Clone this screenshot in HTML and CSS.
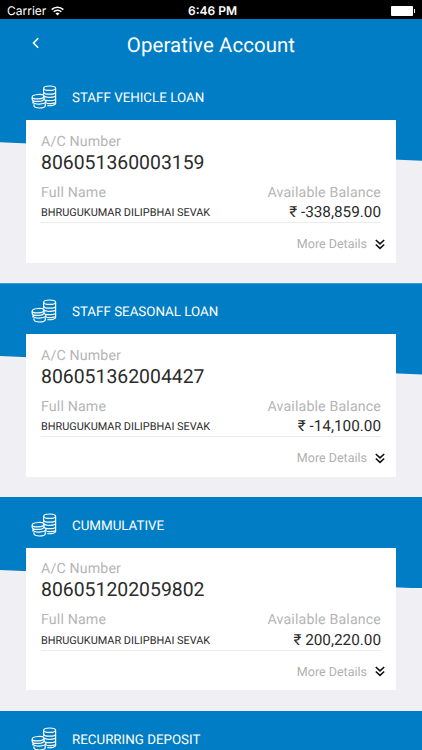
FILE: index.html
```html
<!DOCTYPE html>
<html lang="en">
<head>
  <meta charset="UTF-8">
  <title>Operative Account</title>
  <link rel="stylesheet" href="styles.css">
</head>
<body>
  <!-- shared icons -->
  <svg class="sprite" width="0" height="0">
    <symbol id="coins" viewBox="0 0 26 24">
      <g fill="none" stroke="#fff" stroke-width="1.2">
        <ellipse cx="18.6" cy="3.2" rx="6" ry="2.2"/>
        <path d="M12.6 3.2v6M24.6 3.2v15.3c0 1.4-3.4 2.5-8.2 2.2"/>
        <path d="M12.6 6.9c0 3 12 3 12 0M12.6 10.6c1.6 2.3 12 2.3 12 0M14.8 15.4c4.8.8 9.8-.1 9.8-1.5M15.6 18.5c4.5.4 9-.3 9-1.6"/>
        <ellipse cx="7.1" cy="11.7" rx="5.9" ry="2.2" transform="rotate(-5 7.1 11.7)"/>
        <path d="M1.2 12.2v2.4c.7 2.8 11.2 2.3 11.9-.8v-2.5M2.2 16.1c-.5.7-.4 1.7 0 2.3M13.1 14.2l1.8 1.5v2.7"/>
        <path d="M2.2 17.3c1.5 2.6 11.2 2.3 12.7-.5M3 19.3v1.8c1.3 2.6 10.1 2.5 11.3-.2v-2.3"/>
      </g>
    </symbol>
    <symbol id="chevrons" viewBox="0 0 10 11">
      <path d="M.8 1L5 4.8 9.2 1M.8 5.5L5 9.3l4.2-3.8" fill="none" stroke="#111" stroke-width="1.6"/>
    </symbol>
  </svg>

  <div class="status-bar">
    <div class="carrier">
      <span>Carrier</span>
      <svg width="13" height="10" viewBox="0 0 13 10">
        <path d="M.7 3.6a8.2 8.2 0 0 1 11.6 0M2.7 5.8a5.4 5.4 0 0 1 7.6 0" fill="none" stroke="#fff" stroke-width="1.6"/>
        <path d="M6.5 9.5L4.5 7.4a2.9 2.9 0 0 1 4 0z" fill="#fff"/>
      </svg>
    </div>
    <div class="time">6:46 PM</div>
    <div class="battery"><span class="cell"></span><span class="tip"></span></div>
  </div>

  <header class="nav">
    <svg class="back" width="8" height="12" viewBox="0 0 8 12">
      <path d="M6.2 1.2L1.5 6l4.7 4.8" fill="none" stroke="#fff" stroke-width="1.6"/>
    </svg>
    <h1>Operative Account</h1>
  </header>

  <main>
    <section class="account">
      <div class="account-head"><svg class="coins"><use href="#coins"/></svg><h2>STAFF VEHICLE LOAN</h2></div>
      <div class="card">
        <div class="label">A/C Number</div>
        <div class="number">806051360003159</div>
        <div class="row labels"><span class="label">Full Name</span><span class="label">Available Balance</span></div>
        <div class="row values"><span class="name">BHRUGUKUMAR DILIPBHAI SEVAK</span><span class="balance">₹ -338,859.00</span></div>
        <div class="more"><span>More Details</span><svg width="10" height="11"><use href="#chevrons"/></svg></div>
      </div>
    </section>

    <section class="account">
      <div class="account-head"><svg class="coins"><use href="#coins"/></svg><h2>STAFF SEASONAL LOAN</h2></div>
      <div class="card">
        <div class="label">A/C Number</div>
        <div class="number">806051362004427</div>
        <div class="row labels"><span class="label">Full Name</span><span class="label">Available Balance</span></div>
        <div class="row values"><span class="name">BHRUGUKUMAR DILIPBHAI SEVAK</span><span class="balance">₹ -14,100.00</span></div>
        <div class="more"><span>More Details</span><svg width="10" height="11"><use href="#chevrons"/></svg></div>
      </div>
    </section>

    <section class="account">
      <div class="account-head"><svg class="coins"><use href="#coins"/></svg><h2>CUMMULATIVE</h2></div>
      <div class="card">
        <div class="label">A/C Number</div>
        <div class="number">806051202059802</div>
        <div class="row labels"><span class="label">Full Name</span><span class="label">Available Balance</span></div>
        <div class="row values"><span class="name">BHRUGUKUMAR DILIPBHAI SEVAK</span><span class="balance">₹ 200,220.00</span></div>
        <div class="more"><span>More Details</span><svg width="10" height="11"><use href="#chevrons"/></svg></div>
      </div>
    </section>

    <section class="account">
      <div class="account-head"><svg class="coins"><use href="#coins"/></svg><h2>RECURRING DEPOSIT</h2></div>
    </section>
  </main>
</body>
</html>
```

FILE: styles.css
```css
* {
  box-sizing: border-box;
}

body {
  margin: 0;
  height: 750px;
  overflow: hidden;
  display: flex;
  flex-direction: column;
  background: #efeff4;
  color: #2b2b2b;
  font-family: Roboto, sans-serif;
  text-rendering: geometricPrecision;
}

h1, h2 {
  margin: 0;
  font-weight: 400;
}

main {
  flex: 1;
  min-height: 0;
  overflow: hidden;
}

.sprite {
  position: absolute;
}

/* status bar */
.status-bar {
  flex: none;
  height: 19px;
  padding: 3px 7px 0;
  display: grid;
  grid-template-columns: 1fr auto 1fr;
  align-items: center;
  background: #000;
  color: #fff;
  font-family: Inter, sans-serif;
  font-size: 12px;
  line-height: 16px;
}

.carrier {
  display: flex;
  align-items: center;
  gap: 5px;
}

.time {
  padding-left: 3px;
  font-weight: 600;
}

.battery {
  display: flex;
  align-items: center;
  justify-content: flex-end;
  gap: 1px;
}

.cell {
  width: 22px;
  height: 10px;
  border-radius: 1px;
  background: #fff;
}

.tip {
  width: 1px;
  height: 4px;
  background: #fff;
}

/* title */
.nav {
  flex: none;
  height: 50.5px;
  padding: 0 32px;
  display: grid;
  grid-template-columns: 8px 1fr 8px;
  background: #007dc4;
  color: #fff;
}

.back {
  margin-top: 18px;
}

.nav h1 {
  text-align: center;
  font-size: 20.4px;
  line-height: 52px;
  letter-spacing: 0.1px;
}

/* accounts */
.account {
  position: relative;
  height: 213.8px;
  padding: 0 26px;
}

/* slanted blue band behind the top of the card */
.account::before {
  content: "";
  position: absolute;
  z-index: -1;
  top: 0;
  left: 0;
  right: 0;
  height: 91.3px;
  background: #007dc4;
  clip-path: polygon(0 0, 100% 0, 100% 100%, 0 72.8px);
}

.account-head {
  height: 50.8px;
  padding: 5px 0 0 5px;
  display: flex;
  align-items: center;
  gap: 15px;
  color: #fff;
}

.coins {
  width: 26px;
  height: 24px;
}

.account-head h2 {
  padding-top: 3px;
  font-size: 13.35px;
}

.card {
  height: 142.5px;
  padding: 12.5px 15px 0;
  background: #fff;
}

.label {
  color: #b5b5b5;
  font-size: 14.2px;
  line-height: 18px;
  letter-spacing: 0.15px;
}

.number {
  font-size: 19.4px;
  line-height: 24px;
}

.row {
  display: flex;
  justify-content: space-between;
  align-items: center;
}

.labels {
  margin-top: 9px;
}

.values {
  height: 21.5px;
  border-bottom: 1px solid #ebebeb;
}

.name {
  padding-top: 1px;
  font-size: 10.9px;
}

.balance {
  font-size: 15.3px;
}

.more {
  display: flex;
  justify-content: flex-end;
  align-items: center;
  gap: 7.5px;
  margin: 12px -3.5px 0 0;
  color: #b0b0b0;
  font-size: 12.5px;
  line-height: 18px;
}

.more span {
  padding-top: 1px;
}

.more svg {
  margin-bottom: 1px;
}
```
